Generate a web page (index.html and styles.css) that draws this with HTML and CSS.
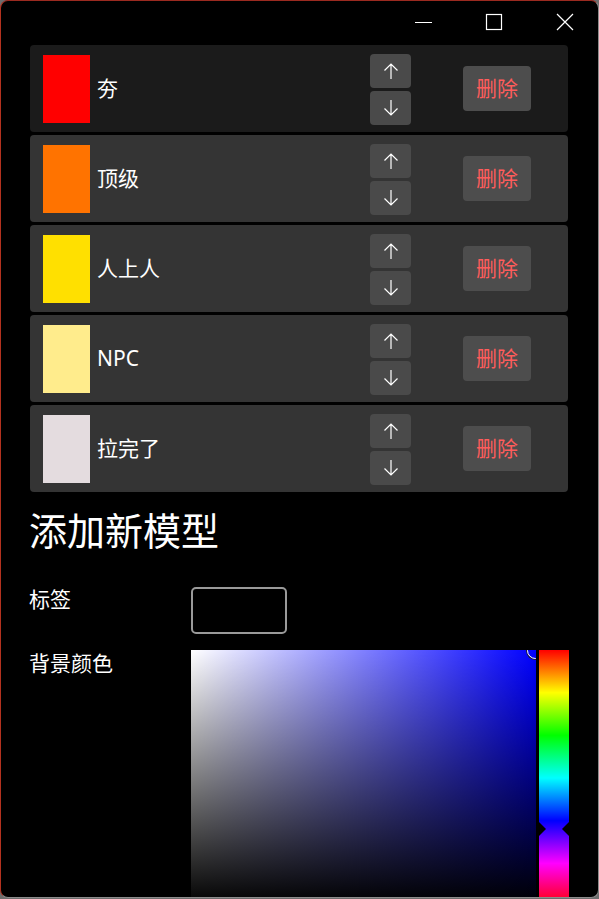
FILE: index.html
```html
<!DOCTYPE html>
<html lang="zh">
<head>
<meta charset="utf-8">
<link rel="stylesheet" href="styles.css">
</head>
<body>
<div class="window">
  <div class="titlebar">
    <div class="cap-btn">
      <svg width="18" height="18" viewBox="0 0 18 18"><line x1="1" y1="9.5" x2="18" y2="9.5" stroke="#fff" stroke-width="1"/></svg>
    </div>
    <div class="cap-btn">
      <svg width="18" height="18" viewBox="0 0 18 18"><rect x="1.5" y="1.5" width="15" height="15" fill="none" stroke="#fff" stroke-width="1.2"/></svg>
    </div>
    <div class="cap-btn">
      <svg width="18" height="18" viewBox="0 0 18 18"><path d="M1 1 L17 17 M17 1 L1 17" stroke="#fff" stroke-width="1.2" fill="none"/></svg>
    </div>
  </div>

  <div class="content">
    <div class="list">
      <div class="row row-first">
        <div class="swatch" style="background:#ff0000"></div>
        <div class="name">夯</div>
        <div class="arrows">
          <div class="arrow-btn"><svg width="16" height="18" viewBox="0 0 16 18"><path d="M8 17 V2 M1.5 8.5 L8 2 L14.5 8.5" stroke="#fff" stroke-width="1.2" fill="none"/></svg></div>
          <div class="arrow-btn"><svg width="16" height="18" viewBox="0 0 16 18"><path d="M8 1 V16 M1.5 9.5 L8 16 L14.5 9.5" stroke="#fff" stroke-width="1.2" fill="none"/></svg></div>
        </div>
        <div class="del-btn">删除</div>
      </div>
      <div class="row">
        <div class="swatch" style="background:#ff7300"></div>
        <div class="name">顶级</div>
        <div class="arrows">
          <div class="arrow-btn"><svg width="16" height="18" viewBox="0 0 16 18"><path d="M8 17 V2 M1.5 8.5 L8 2 L14.5 8.5" stroke="#fff" stroke-width="1.2" fill="none"/></svg></div>
          <div class="arrow-btn"><svg width="16" height="18" viewBox="0 0 16 18"><path d="M8 1 V16 M1.5 9.5 L8 16 L14.5 9.5" stroke="#fff" stroke-width="1.2" fill="none"/></svg></div>
        </div>
        <div class="del-btn">删除</div>
      </div>
      <div class="row">
        <div class="swatch" style="background:#ffe000"></div>
        <div class="name">人上人</div>
        <div class="arrows">
          <div class="arrow-btn"><svg width="16" height="18" viewBox="0 0 16 18"><path d="M8 17 V2 M1.5 8.5 L8 2 L14.5 8.5" stroke="#fff" stroke-width="1.2" fill="none"/></svg></div>
          <div class="arrow-btn"><svg width="16" height="18" viewBox="0 0 16 18"><path d="M8 1 V16 M1.5 9.5 L8 16 L14.5 9.5" stroke="#fff" stroke-width="1.2" fill="none"/></svg></div>
        </div>
        <div class="del-btn">删除</div>
      </div>
      <div class="row">
        <div class="swatch" style="background:#ffec8c"></div>
        <div class="name">NPC</div>
        <div class="arrows">
          <div class="arrow-btn"><svg width="16" height="18" viewBox="0 0 16 18"><path d="M8 17 V2 M1.5 8.5 L8 2 L14.5 8.5" stroke="#fff" stroke-width="1.2" fill="none"/></svg></div>
          <div class="arrow-btn"><svg width="16" height="18" viewBox="0 0 16 18"><path d="M8 1 V16 M1.5 9.5 L8 16 L14.5 9.5" stroke="#fff" stroke-width="1.2" fill="none"/></svg></div>
        </div>
        <div class="del-btn">删除</div>
      </div>
      <div class="row">
        <div class="swatch" style="background:#e4dcdf"></div>
        <div class="name">拉完了</div>
        <div class="arrows">
          <div class="arrow-btn"><svg width="16" height="18" viewBox="0 0 16 18"><path d="M8 17 V2 M1.5 8.5 L8 2 L14.5 8.5" stroke="#fff" stroke-width="1.2" fill="none"/></svg></div>
          <div class="arrow-btn"><svg width="16" height="18" viewBox="0 0 16 18"><path d="M8 1 V16 M1.5 9.5 L8 16 L14.5 9.5" stroke="#fff" stroke-width="1.2" fill="none"/></svg></div>
        </div>
        <div class="del-btn">删除</div>
      </div>
    </div>

    <h1 class="heading">添加新模型</h1>

    <div class="form">
      <div class="label">标签</div>
      <div class="field"><div class="textbox"></div></div>
      <div class="label label-color">背景颜色</div>
      <div class="field picker">
        <div class="sv">
          <div class="sv-thumb"></div>
        </div>
        <div class="hue">
          <div class="hue-mark hue-mark-left"></div>
          <div class="hue-mark hue-mark-right"></div>
        </div>
      </div>
    </div>
  </div>
</div>
</body>
</html>
```

FILE: styles.css
```css
* { box-sizing: border-box; }

html, body {
  margin: 0;
  padding: 0;
  height: 899px;
  overflow: hidden;
}

body {
  background: #6e6e6e;
  font-family: "Noto Sans", "Noto Sans CJK SC", sans-serif;
  color: #fff;
}

.window {
  width: 599px;
  height: 898px;
  background: #000;
  border: 1px solid #8c8c8c;
  border-top-color: #9b2a20;
  border-left-color: #b3321f;
  border-radius: 8px;
  overflow: hidden;
}

.titlebar {
  height: 44px;
  display: flex;
  justify-content: flex-end;
  margin-right: -2px;
}

.cap-btn {
  width: 71px;
  height: 44px;
  display: flex;
  align-items: center;
  justify-content: center;
  padding-bottom: 2px;
}

.content {
  padding: 0 30px 0 28px;
}

.list {
  display: flex;
  flex-direction: column;
  gap: 3px;
  margin-left: 1px;
}

.row {
  height: 87px;
  background: #343434;
  border-radius: 4px;
  display: grid;
  grid-template-columns: 47px 1fr 41px 52px 68px;
  align-items: center;
  padding: 0 37px 0 13px;
}

.row-first {
  background: #1b1b1b;
}

.swatch {
  width: 47px;
  height: 68px;
}

.name {
  padding-left: 7px;
  font-size: 21px;
  line-height: 1;
  margin-top: -1px;
}

.arrows {
  grid-column: 3;
  display: flex;
  flex-direction: column;
  gap: 3px;
  margin-top: 1px;
}

.arrow-btn {
  width: 41px;
  height: 34px;
  background: #4a4a4a;
  border-radius: 4px;
  display: flex;
  align-items: center;
  justify-content: center;
}

.del-btn {
  grid-column: 5;
  width: 68px;
  height: 45px;
  background: #4d4d4d;
  border-radius: 4px;
  color: #ff5c5c;
  font-size: 21px;
  display: flex;
  align-items: center;
  justify-content: center;
  padding-bottom: 3px;
}

.heading {
  margin: 13px 0 0 0;
  font-size: 38px;
  font-weight: 400;
  line-height: 50px;
}

.form {
  margin-top: 32px;
  display: grid;
  grid-template-columns: 162px 1fr;
  row-gap: 16px;
}

.label {
  font-size: 21px;
  line-height: 26px;
  margin-top: -1px;
}

.label-color {
  margin-top: 0;
}

.textbox {
  width: 96px;
  height: 47px;
  border: 2px solid #9a9a9a;
  border-radius: 5px;
}

.picker {
  display: flex;
  gap: 3px;
}

.sv {
  position: relative;
  width: 345px;
  height: 256px;
  overflow: hidden;
  background:
    linear-gradient(to top, #000 0%, rgba(0,0,0,0) 100%),
    linear-gradient(to right, #fff 0%, #0000ff 100%);
}

.sv-thumb {
  position: absolute;
  top: -8px;
  right: -8px;
  width: 17px;
  height: 17px;
  border-radius: 50%;
  border: 1.5px solid #fff;
  box-shadow: 0 0 0 1px #222;
}

.hue {
  position: relative;
  width: 30px;
  height: 256px;
  background: linear-gradient(to bottom, #f00 0%, #ff0 16.67%, #0f0 33.33%, #0ff 50%, #00f 66.67%, #f0f 83.33%, #f00 100%);
}

.hue-mark {
  position: absolute;
  top: 172px;
  width: 0;
  height: 0;
  border-top: 7px solid transparent;
  border-bottom: 7px solid transparent;
}

.hue-mark-left {
  left: 0;
  border-left: 7px solid #000;
}

.hue-mark-right {
  right: 0;
  border-right: 7px solid #000;
}
```
